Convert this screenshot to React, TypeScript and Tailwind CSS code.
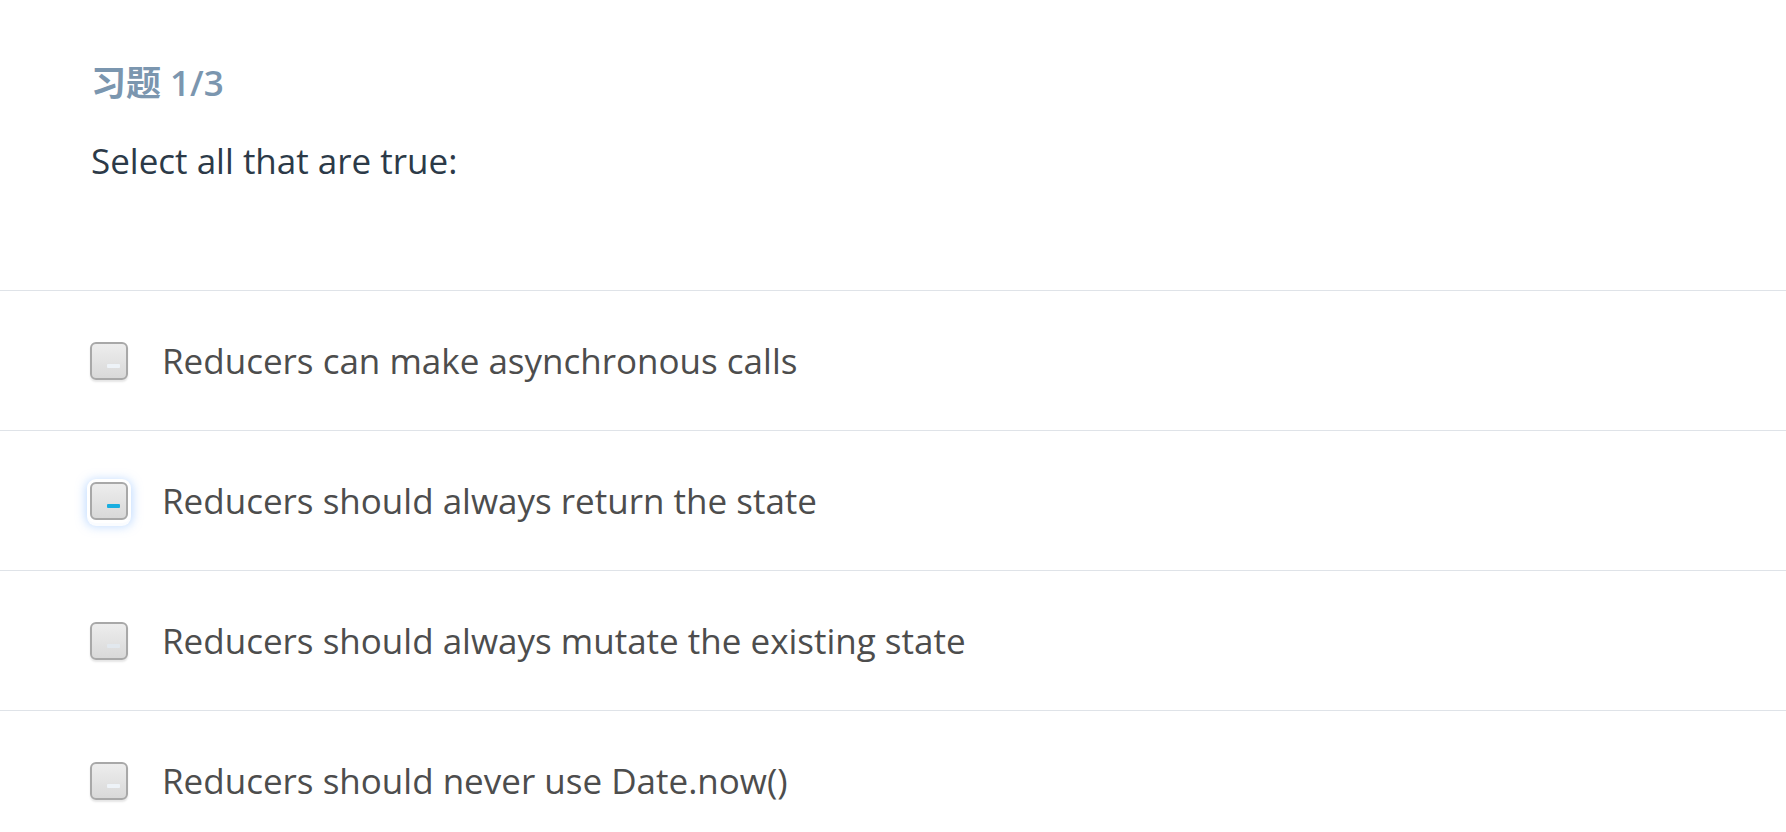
import React from "react";

const options = [
  { text: "Reducers can make asynchronous calls", focused: false, dash: "bg-[#eef3f8]" },
  { text: "Reducers should always return the state", focused: true, dash: "bg-[#19aee0]" },
  { text: "Reducers should always mutate the existing state", focused: false, dash: "bg-[#e2e8ee]" },
  { text: "Reducers should never use Date.now()", focused: false, dash: "bg-[#eef3f8]" },
];

function Box({ focused, dash }: { focused: boolean; dash: string }) {
  return (
    <div
      className={
        "relative w-[38px] h-[38px] shrink-0 rounded-[6px] border-2 border-[#a8a8a8] bg-gradient-to-b from-[#ededed] to-[#d9d9d9] " +
        (focused
          ? "shadow-[0_0_0_3px_rgba(255,255,255,1),0_3px_0_3px_rgba(250,252,255,1),0_2px_10px_5px_rgba(140,190,255,0.5)]"
          : "shadow-[0_2px_2px_rgba(0,0,0,0.1)]")
      }
    >
      <div className={"absolute left-[15px] top-[20px] w-[13px] h-[4px] rounded-[1px] " + dash} />
    </div>
  );
}

export default function App() {
  return (
    <div className="min-h-screen bg-white font-['Open_Sans','Noto_Sans_CJK_SC',sans-serif]">
      <div className="h-[290px] pl-[91px] pt-[61px]">
        <div className="text-[35px] leading-[44px] font-semibold text-[#7b96af]">习题 1/3</div>
        <div className="mt-[33px] text-[35px] leading-[46px] text-[#2c3a48]">Select all that are true:</div>
      </div>
      {options.map((o) => (
        <div
          key={o.text}
          className="h-[140px] border-t border-[#dfe3e8] flex items-center pl-[90px] gap-[34px]"
        >
          <Box focused={o.focused} dash={o.dash} />
          <span className="text-[35px] leading-[46px] text-[#4d4d4d]">{o.text}</span>
        </div>
      ))}
    </div>
  );
}
